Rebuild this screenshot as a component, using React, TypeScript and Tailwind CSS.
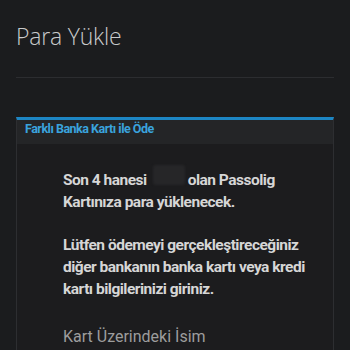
export default function App() {
  return (
    <div className="w-[350px] h-[350px] overflow-hidden bg-[#1b1c1e]">
      <div className="px-4 pt-[21px]">
        <h1 className="font-['Open_Sans',sans-serif] font-light text-[23px] leading-[30px] tracking-[-0.2px] text-[#c9cacb]">
          Para Yükle
        </h1>
        <div className="mt-[26px] h-px bg-[#2c2d30]" />
      </div>

      <div className="mx-4 mt-[39px] border-t-[3px] border-t-[#1d86c4] bg-[#1c1c1e] border-x border-x-[#2d2e31]">
        <div className="h-[24px] bg-[#242527] px-2 pt-[2px]">
          <span className="block font-['Roboto',sans-serif] font-bold text-[12.5px] leading-[14px] tracking-[-0.5px] text-[#3aa3dd]">
            Farklı Banka Kartı ile Öde
          </span>
        </div>
        <div className="pl-[46px] pr-2 pt-[21px] pb-10 font-['Roboto',sans-serif]">
          <p className="font-bold text-[15.5px] leading-[22px] tracking-[-0.5px] text-[#d6d6d6]">
            Son 4 hanesi
            <span className="inline-block ml-[6px] mr-[3px] w-[32px] h-[20px] bg-[#262628] rounded-[3px] blur-[1px]" />
            olan Passolig
            <br />
            Kartınıza para yüklenecek.
          </p>
          <p className="mt-[21px] font-bold text-[15.5px] leading-[22px] tracking-[-0.5px] text-[#d6d6d6]">
            Lütfen ödemeyi gerçekleştireceğiniz
            <br />
            diğer bankanın banka kartı veya kredi
            <br />
            kartı bilgilerinizi giriniz.
          </p>
          <p className="mt-[26px] text-[16px] leading-[22px] text-[#9d9d9d]">
            Kart Üzerindeki İsim
          </p>
        </div>
      </div>
    </div>
  );
}
